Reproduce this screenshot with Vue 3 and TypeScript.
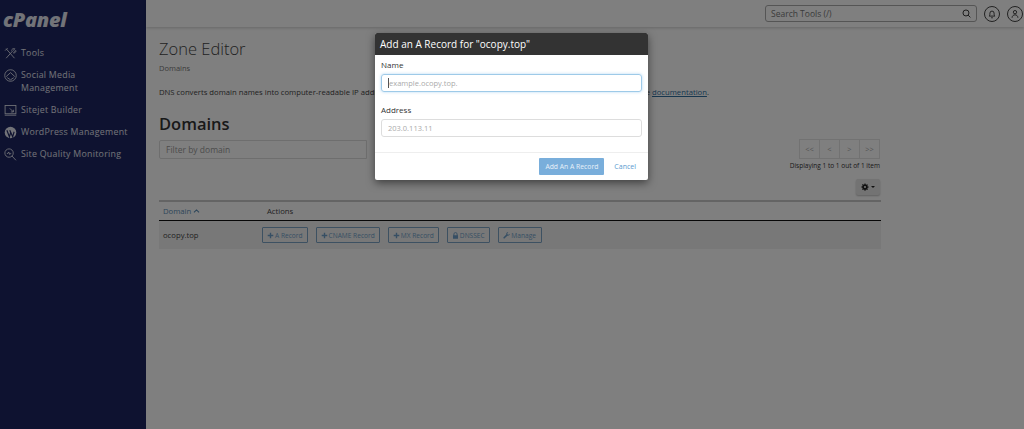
<script setup lang="ts">
interface NavItem {
  label: string
  icon: string
}

const navItems: NavItem[] = [
  { label: 'Tools', icon: 'tools' },
  { label: 'Social Media Management', icon: 'social' },
  { label: 'Sitejet Builder', icon: 'sitejet' },
  { label: 'WordPress Management', icon: 'wp' },
  { label: 'Site Quality Monitoring', icon: 'quality' },
]

const rowActions = [
  { label: 'A Record', icon: 'plus' },
  { label: 'CNAME Record', icon: 'plus' },
  { label: 'MX Record', icon: 'plus' },
  { label: 'DNSSEC', icon: 'lock' },
  { label: 'Manage', icon: 'wrench' },
]

const pages = ['<<', '<', '>', '>>']
</script>

<template>
  <div class="page">
    <aside class="sidebar">
      <div class="logo">cPanel</div>
      <nav class="nav">
        <a v-for="item in navItems" :key="item.label" class="nav-item">
          <svg class="nav-icon" viewBox="0 0 18 18" fill="none" stroke="currentColor" stroke-width="1.2">
            <template v-if="item.icon === 'tools'">
              <path d="M3 2.500l11.500 13M3 15.500L12 5.500M10.500 5c0-2 2.500-3.500 4.500-2.500l-2 2 1.500 1.500 2-1c.5 2-2 4-4 3M1.500 5L5 1.500" />
            </template>
            <template v-else-if="item.icon === 'social'">
              <circle cx="9" cy="9" r="8" />
              <path d="M3 10.500L9 5l6 5.500M4.500 12l4.500 3 4.500-3" />
            </template>
            <template v-else-if="item.icon === 'sitejet'">
              <rect x="1.500" y="2" width="15" height="11.500" />
              <path d="M8 6l5 5M9.500 11l3.500 0 0-3M1 15.500h16" />
            </template>
            <template v-else-if="item.icon === 'wp'">
              <circle cx="9" cy="9" r="8" fill="currentColor" stroke="none" />
              <path d="M4 6l3.500 9L9.500 8M8 6l4 9 2-7" stroke="#1c2561" stroke-width="1.600" />
            </template>
            <template v-else>
              <circle cx="7" cy="7" r="5.800" />
              <path d="M11 11l5.500 6M4 7.500h1.500l1-2 1.500 3.500 1-1.500h1" />
            </template>
          </svg>
          <span class="nav-label">{{ item.label }}</span>
        </a>
      </nav>
    </aside>

    <div class="main">
      <header class="topbar">
        <div class="search">
          <span>Search Tools (/)</span>
          <svg class="search-icon" viewBox="0 0 12 12" fill="none" stroke="currentColor" stroke-width="1.300">
            <circle cx="5.300" cy="5.300" r="4" />
            <path d="M8.200 8.200l3 3" />
          </svg>
        </div>
        <span class="round-btn">
          <svg viewBox="0 0 12 12" fill="none" stroke="currentColor" stroke-width="1.100">
            <path d="M2.500 8.500c1-1 1-2 1-3.500a2.500 2.500 0 0 1 5 0c0 1.500 0 2.500 1 3.500zM5 10.500h2" />
          </svg>
        </span>
        <span class="round-btn">
          <svg viewBox="0 0 12 12" fill="none" stroke="currentColor" stroke-width="1.100">
            <circle cx="6" cy="3.800" r="2" />
            <path d="M2.500 10.500c0-2 1.500-3.500 3.500-3.500s3.500 1.500 3.500 3.500" />
          </svg>
        </span>
      </header>

      <main class="content">
        <h1 class="title">Zone Editor</h1>
        <div class="crumb">Domains</div>
        <p class="intro">
          DNS converts domain names into computer-readable IP addresses. Use this feature to manage DNS zones. For more
          information, see the <a class="link">documentation</a>.
        </p>
        <h2 class="section">Domains</h2>

        <div class="tools-row">
          <div class="filter">Filter by domain</div>
          <div class="pager-col">
            <div class="pager">
              <span v-for="p in pages" :key="p" class="page-cell">{{ p }}</span>
            </div>
            <div class="count">Displaying 1 to 1 out of 1 item</div>
            <span class="gear-btn">
              <svg viewBox="0 0 16 16" class="gear" fill="currentColor">
                <path d="M7 1h2l.4 2 1.300.5 1.700-1.100 1.400 1.400-1.100 1.700.5 1.300 2 .4v2l-2 .4-.5 1.300 1.100 1.700-1.400 1.400-1.700-1.100-1.300.5-.4 2H7l-.4-2-1.300-.5-1.700 1.100-1.400-1.400 1.100-1.700-.5-1.300-2-.4V7l2-.4.5-1.300-1.100-1.700 1.400-1.400 1.700 1.100 1.300-.5zM8 5.800a2.200 2.200 0 1 0 0 4.400 2.200 2.200 0 0 0 0-4.400z" />
              </svg>
              <i class="caret"></i>
            </span>
          </div>
        </div>

        <table class="table">
          <thead>
            <tr>
              <th class="col-domain">
                Domain
                <svg class="sort" viewBox="0 0 8 5" fill="none" stroke="currentColor" stroke-width="1.400">
                  <path d="M.8 4.200L4 1.200l3.200 3" />
                </svg>
              </th>
              <th class="col-actions">Actions</th>
            </tr>
          </thead>
          <tbody>
            <tr>
              <td>ocopy.top</td>
              <td>
                <div class="actions">
                  <span v-for="a in rowActions" :key="a.label" class="action">
                    <svg class="action-icon" viewBox="0 0 10 10" fill="currentColor">
                      <path v-if="a.icon === 'plus'" d="M4 1h2v3h3v2H6v3H4V6H1V4h3z" />
                      <path v-else-if="a.icon === 'lock'" d="M2 4.500V3.200a3 3 0 0 1 6 0v1.300h.6V9.500H1.400v-5zM3.400 4.500h3.200V3.200a1.600 1.600 0 0 0-3.200 0z" />
                      <path v-else d="M9.500 2.500L7.800 4 6.500 3.500 6 2.200 7.500.6C6 .2 4.600 1.200 4.600 2.800c0 .3 0 .6.100.8L.8 7.500a1 1 0 0 0 1.600 1.600l3.900-3.900c1.900.5 3.700-1 3.200-2.700z" />
                    </svg>
                    {{ a.label }}
                  </span>
                </div>
              </td>
            </tr>
          </tbody>
        </table>
      </main>
    </div>

    <div class="backdrop"></div>

    <section class="modal">
      <div class="modal-head">Add an A Record for "ocopy.top"</div>
      <div class="modal-body">
        <label class="field-label">Name</label>
        <div class="input focused"><i class="cursor"></i>example.ocopy.top.</div>
        <label class="field-label second">Address</label>
        <div class="input">203.0.113.11</div>
      </div>
      <div class="modal-foot">
        <span class="submit">Add An A Record</span>
        <a class="cancel">Cancel</a>
      </div>
    </section>
  </div>
</template>

<style>
html,
body {
  margin: 0;
  background: #fff;
}
</style>

<style scoped>
.page {
  position: relative;
  display: flex;
  width: 1024px;
  height: 429px;
  overflow: hidden;
  background: #fff;
  font-family: 'Open Sans', 'Liberation Sans', sans-serif;
  color: #333;
}

.sidebar {
  flex: 0 0 146px;
  background: #1c2561;
  color: #e4e6f0;
}

.logo {
  padding: 7px 0 0 3px;
  font-size: 20px;
  font-style: italic;
  font-weight: 800;
  line-height: 25px;
  letter-spacing: -0.3px;
}

.nav {
  display: flex;
  flex-direction: column;
  padding-top: 14px;
}

.nav-item {
  display: flex;
  align-items: flex-start;
  gap: 4px;
  padding: 0 4px 8px;
  font-size: 8.800px;
  line-height: 13px;
  letter-spacing: 0.27px;
}

.nav-icon {
  flex: 0 0 13px;
  width: 13px;
  height: 13px;
  margin-top: 1px;
}

.nav-label {
  padding-top: 1px;
  max-width: 112px;
}

.main {
  flex: 1;
  min-width: 0;
}

.topbar {
  display: flex;
  align-items: center;
  justify-content: flex-end;
  gap: 7px;
  height: 27px;
  padding-right: 1px;
  box-shadow: 0 1px 3px rgba(0, 0, 0, 0.2);
  box-sizing: border-box;
}

.search {
  display: flex;
  align-items: center;
  justify-content: space-between;
  width: 212px;
  height: 17px;
  padding: 0 5px;
  box-sizing: border-box;
  border: 1px solid #aaa;
  border-radius: 3px;
  font-size: 8.500px;
  color: #777;
}

.search-icon {
  width: 9px;
  height: 9px;
  color: #333;
}

.round-btn {
  display: flex;
  align-items: center;
  justify-content: center;
  width: 16px;
  height: 16px;
  border: 1px solid #444;
  border-radius: 50%;
  color: #333;
  box-sizing: border-box;
}

.round-btn svg {
  width: 10px;
  height: 10px;
}

.content {
  padding: 11px 143px 0 13px;
}

.title {
  margin: 0;
  font-size: 16.500px;
  line-height: 22px;
  font-weight: 300;
  color: #444;
}

.crumb {
  margin-top: 3px;
  font-size: 7.500px;
  line-height: 11px;
  color: #777;
}

.intro {
  margin: 12px 0 0;
  font-size: 7.700px;
  line-height: 12px;
  white-space: nowrap;
  color: #444;
}

.link {
  color: #2f6f9f;
  text-decoration: underline;
}

.section {
  margin: 14px 0 0;
  font-size: 16.500px;
  line-height: 24px;
  font-weight: 600;
  color: #333;
}

.tools-row {
  display: flex;
  justify-content: space-between;
  align-items: flex-start;
  margin-top: 3px;
}

.filter {
  width: 208px;
  height: 19px;
  margin-top: 1px;
  line-height: 17px;
  padding-left: 6px;
  box-sizing: border-box;
  border: 1px solid #ddd;
  border-radius: 2px 0 0 2px;
  font-size: 8.500px;
  color: #999;
}

.pager-col {
  display: flex;
  flex-direction: column;
  align-items: flex-end;
  padding-right: 1px;
}

.pager {
  display: flex;
}

.page-cell {
  width: 19px;
  height: 18px;
  line-height: 18px;
  text-align: center;
  border: 1px solid #e4e4e4;
  margin-left: -1px;
  font-size: 7.500px;
  color: #aaa;
}

.count {
  margin-top: 2px;
  font-size: 6.500px;
  line-height: 10px;
  color: #333;
}

.gear-btn {
  display: flex;
  align-items: center;
  justify-content: center;
  gap: 2px;
  margin-top: 8px;
  width: 24px;
  height: 16px;
  background: #e6e6e6;
  border-radius: 2px;
  box-shadow: 0 1px 2px rgba(0, 0, 0, 0.25);
  color: #222;
}

.gear {
  width: 8px;
  height: 8px;
}

.caret {
  width: 0;
  height: 0;
  border-left: 2px solid transparent;
  border-right: 2px solid transparent;
  border-top: 2px solid #222;
}

.table {
  width: 100%;
  margin-top: 5px;
  border-collapse: collapse;
  border-top: 2px solid #c8c8c8;
  font-size: 7.700px;
}

.table th {
  height: 18px;
  padding: 0 4px;
  text-align: left;
  font-weight: 400;
  border-bottom: 1px solid #111;
  color: #444;
}

.table th.col-domain {
  width: 91px;
  color: #5a8db5;
}

.table th.col-actions {
  padding-left: 9px;
}

.sort {
  width: 7px;
  height: 4px;
  vertical-align: 1px;
}

.table td {
  height: 28px;
  padding: 0 4px;
  background: #f1f1f1;
  color: #444;
}

.actions {
  display: flex;
  gap: 8px;
}

.action {
  display: inline-flex;
  align-items: center;
  justify-content: center;
  gap: 1px;
  height: 16px;
  padding: 0 4px;
  border: 1px solid #7ba3c4;
  border-radius: 1px;
  font-size: 6.600px;
  color: #6f9fc8;
  box-sizing: border-box;
}

.action:last-child {
  min-width: 44px;
}

.action-icon {
  width: 7px;
  height: 7px;
}

.backdrop {
  position: absolute;
  inset: 0;
  background: rgba(0, 0, 0, 0.5);
}

.modal {
  position: absolute;
  left: 375px;
  top: 33px;
  width: 273px;
  background: #fff;
  border-radius: 2px;
  box-shadow: 0 3px 9px rgba(0, 0, 0, 0.5);
  overflow: hidden;
}

.modal-head {
  height: 22px;
  padding-left: 5px;
  background: #333;
  color: #fff;
  font-size: 10px;
  font-weight: 500;
  line-height: 22px;
}

.modal-body {
  padding: 4px 6px 15px;
}

.field-label {
  display: block;
  font-size: 8px;
  line-height: 12px;
  color: #333;
  font-weight: 500;
}

.field-label.second {
  margin-top: 12px;
}

.input {
  display: flex;
  align-items: center;
  height: 18px;
  margin-top: 3px;
  padding-left: 6px;
  box-sizing: border-box;
  border: 1px solid #ddd;
  border-radius: 3px;
  font-size: 7.500px;
  color: #aaa;
}

.input.focused {
  border-color: #9ecae8;
  box-shadow: 0 0 3px rgba(102, 175, 233, 0.5);
}

.cursor {
  width: 1px;
  height: 10px;
  background: #555;
}

.modal-foot {
  display: flex;
  align-items: center;
  justify-content: flex-end;
  gap: 10px;
  height: 26px;
  padding: 0 12px 1px 0;
  border-top: 1px solid #eee;
}

.submit {
  height: 17px;
  line-height: 17px;
  padding: 0 6px;
  background: #79aedb;
  border-radius: 1px;
  color: #e8f1f9;
  font-size: 6.800px;
}

.cancel {
  color: #5b9bd0;
  font-size: 7px;
}
</style>
